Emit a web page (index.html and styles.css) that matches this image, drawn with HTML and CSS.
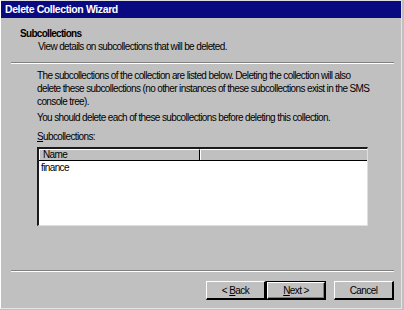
FILE: index.html
```html
<!DOCTYPE html>
<html lang="en">
<head>
  <meta charset="UTF-8" />
  <title>Delete Collection Wizard</title>
  <link rel="stylesheet" href="styles.css">
</head>
<body>
  <div class="window">
    <div class="titlebar">Delete Collection Wizard</div>

    <div class="header">
      <div class="header-title">Subcollections</div>
      <div class="header-sub">View details on subcollections that will be deleted.</div>
    </div>
    <div class="etched"></div>

    <div class="content">
      <p>The subcollections of the collection are listed below. Deleting the collection will also delete these subcollections (no other instances of these subcollections exist in the SMS console tree).</p>
      <p>You should delete each of these subcollections before deleting this collection.</p>
      <div class="label"><u>S</u>ubcollections:</div>
      <div class="listbox">
        <div class="list-head">
          <div class="col col-name">Name</div>
          <div class="col col-rest"></div>
        </div>
        <div class="list-body">
          <div class="row">finance</div>
        </div>
      </div>
    </div>

    <div class="etched"></div>
    <div class="buttons">
      <button class="btn">&lt; <u>B</u>ack</button>
      <button class="btn default"><u>N</u>ext &gt;</button>
      <button class="btn cancel">Cancel</button>
    </div>
  </div>
</body>
</html>
```

FILE: styles.css
```css
body {
  margin: 0;
  background: #c0c0c0;
  font-family: "Liberation Sans", Arial, sans-serif;
  font-size: 10px;
  letter-spacing: -0.62px;
  color: #000;
}
.window {
  width: 402px;
  height: 309px;
  box-sizing: border-box;
  background: #c0c0c0;
  border-top: 1px solid #dfdfdf;
  border-left: 1px solid #fff;
  border-right: 1px solid #e4e4e4;
  border-bottom: 1px solid #e4e4e4;
  display: flex;
  flex-direction: column;
}
.titlebar {
  height: 17px;
  background: #0a0a80;
  color: #fff;
  font-weight: bold;
  font-size: 10.5px;
  letter-spacing: -0.4px;
  line-height: 17px;
  padding-left: 4px;
}
.header {
  height: 44px;
  padding: 9px 0 0 19px;
  box-sizing: border-box;
}
.header-title {
  font-weight: bold;
  letter-spacing: -0.7px;
  line-height: 13px;
}
.header-sub {
  padding-left: 18px;
  line-height: 13px;
}
.etched {
  margin: 0 7px 0 10px;
  height: 1px;
  border-top: 1px solid #808080;
  background: #fff;
}
.content {
  padding: 5px 30px 0 36px;
  height: 206px;
  box-sizing: border-box;
}
.content p {
  margin: 0 0 3px 0;
  line-height: 13px;
}
.label {
  margin-top: 6px;
  line-height: 13px;
}
.listbox {
  margin-top: 4px;
  width: 331px;
  height: 79px;
  box-sizing: border-box;
  border-top: 2px solid #1a1a1a;
  border-left: 2px solid #1a1a1a;
  border-right: 1px solid #dfdfdf;
  border-bottom: 1px solid #dfdfdf;
  background: #fff;
}
.list-head {
  display: flex;
  height: 11px;
  background: #c0c0c0;
  border-bottom: 1px solid #000;
}
.col {
  box-sizing: border-box;
  line-height: 10px;
  padding-left: 3px;
  border-top: 1px solid #fff;
  border-left: 1px solid #fff;
}
.col-name {
  width: 161px;
  border-right: 1px solid #000;
}
.col-rest {
  flex: 1;
}
.row {
  padding-left: 2px;
  line-height: 13px;
}
.buttons {
  display: flex;
  justify-content: flex-end;
  padding: 9px 7px 0 0;
}
.btn {
  width: 60px;
  height: 19px;
  margin: 0;
  padding: 0;
  font-family: inherit;
  font-size: 10px;
  letter-spacing: -0.6px;
  color: #000;
  background: #c0c0c0;
  border-top: 1px solid #fff;
  border-left: 1px solid #fff;
  border-right: 2px solid #000;
  border-bottom: 2px solid #000;
}
.btn.default {
  outline: 1px solid #000;
  outline-offset: -1px;
  border: 2px solid #000;
  border-top-color: #fff;
  border-left-color: #fff;
  box-shadow: inset -1px -1px 0 #808080;
}
.btn.cancel {
  margin-left: 8px;
}
```
